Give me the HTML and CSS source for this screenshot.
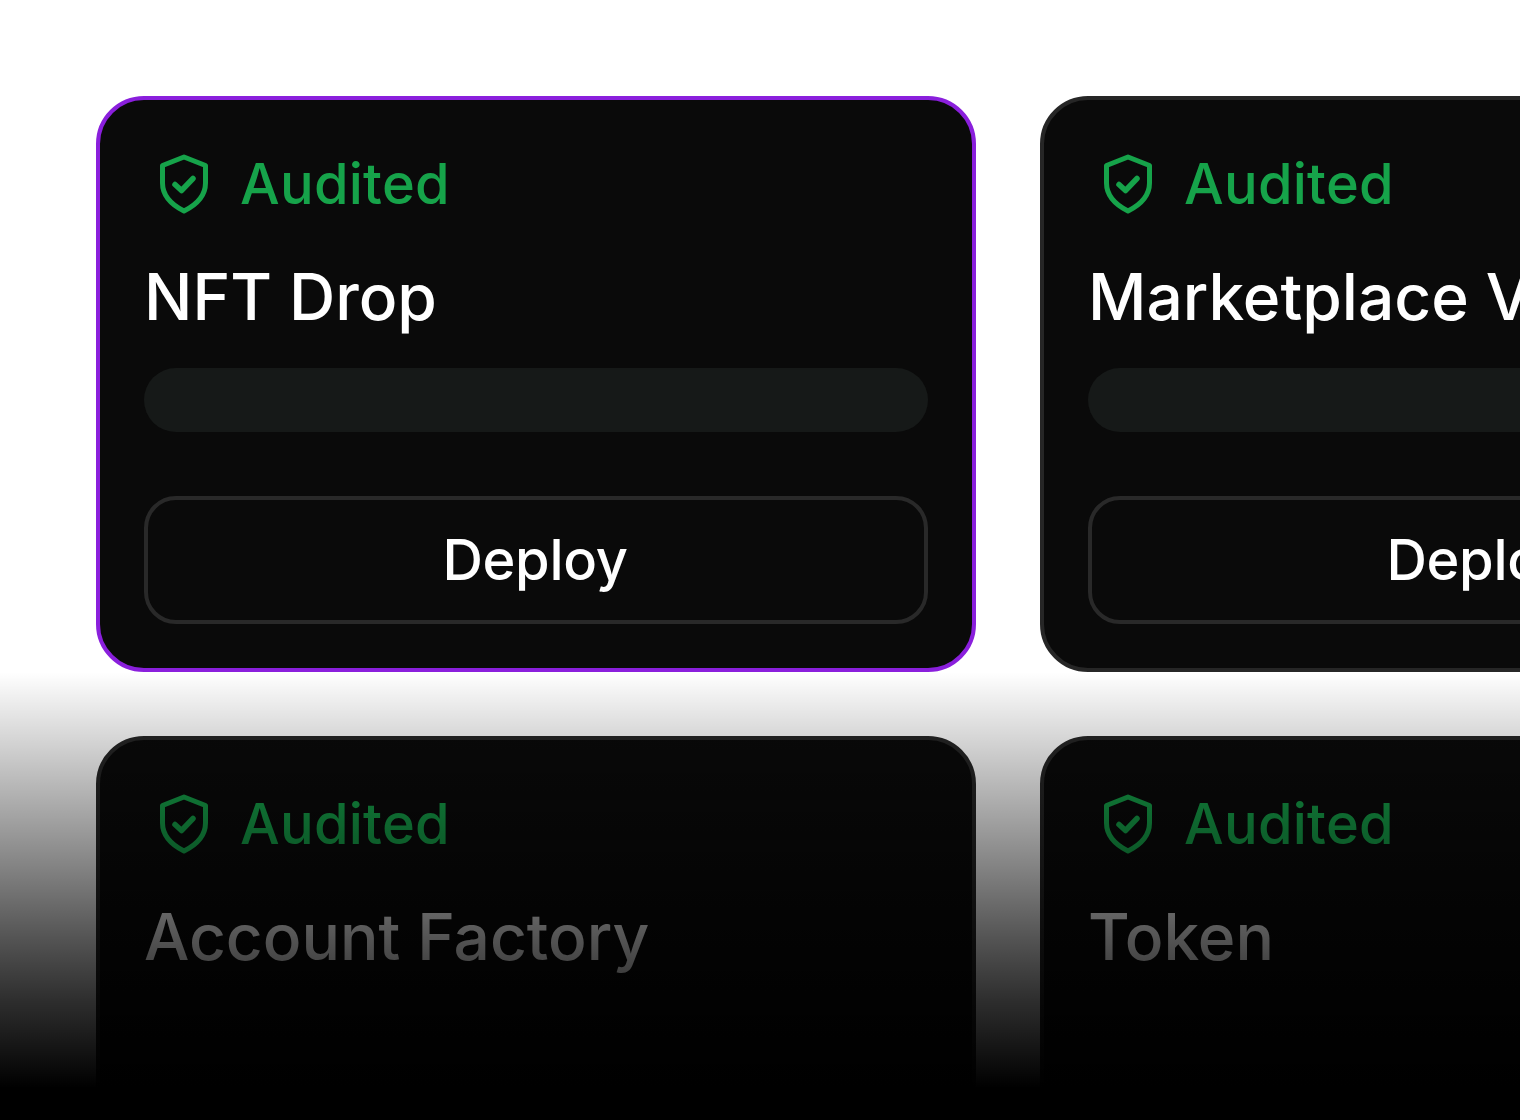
FILE: index.html
```html
<!DOCTYPE html>
<html lang="en">
  <head>
    <meta charset="UTF-8" />
    <meta name="viewport" content="width=device-width, initial-scale=1.0" />
    <title>Contracts</title>
    <link rel="stylesheet" href="styles.css">
  </head>

  <body>
    <main class="grid">
      <article class="card card-active">
        <div class="badge">
          <svg class="shield" viewBox="0 0 64 64" fill="none" stroke="currentColor" stroke-width="5" stroke-linecap="round" stroke-linejoin="round">
            <path d="M32 5 L10.5 13.5 V31 C10.5 45 22 54 32 59 C42 54 53.5 45 53.5 31 V13.5 Z" />
            <path d="M23 32.5 L29.5 38.5 L41 26.5" stroke-width="5.5" />
          </svg>
          <span>Audited</span>
        </div>
        <h2 class="name">NFT Drop</h2>
        <div class="bar"></div>
        <button class="deploy">Deploy</button>
      </article>

      <article class="card">
        <div class="badge">
          <svg class="shield" viewBox="0 0 64 64" fill="none" stroke="currentColor" stroke-width="5" stroke-linecap="round" stroke-linejoin="round">
            <path d="M32 5 L10.5 13.5 V31 C10.5 45 22 54 32 59 C42 54 53.5 45 53.5 31 V13.5 Z" />
            <path d="M23 32.5 L29.5 38.5 L41 26.5" stroke-width="5.5" />
          </svg>
          <span>Audited</span>
        </div>
        <h2 class="name">Marketplace V3</h2>
        <div class="bar"></div>
        <button class="deploy">Deploy</button>
      </article>

      <!-- second row sits under the fade, its bars don't show -->
      <article class="card">
        <div class="badge">
          <svg class="shield" viewBox="0 0 64 64" fill="none" stroke="currentColor" stroke-width="5" stroke-linecap="round" stroke-linejoin="round">
            <path d="M32 5 L10.5 13.5 V31 C10.5 45 22 54 32 59 C42 54 53.5 45 53.5 31 V13.5 Z" />
            <path d="M23 32.5 L29.5 38.5 L41 26.5" stroke-width="5.5" />
          </svg>
          <span>Audited</span>
        </div>
        <h2 class="name">Account Factory</h2>
        <div class="bar bar-empty"></div>
        <button class="deploy">Deploy</button>
      </article>

      <article class="card">
        <div class="badge">
          <svg class="shield" viewBox="0 0 64 64" fill="none" stroke="currentColor" stroke-width="5" stroke-linecap="round" stroke-linejoin="round">
            <path d="M32 5 L10.5 13.5 V31 C10.5 45 22 54 32 59 C42 54 53.5 45 53.5 31 V13.5 Z" />
            <path d="M23 32.5 L29.5 38.5 L41 26.5" stroke-width="5.5" />
          </svg>
          <span>Audited</span>
        </div>
        <h2 class="name">Token</h2>
        <div class="bar bar-empty"></div>
        <button class="deploy">Deploy</button>
      </article>
    </main>

    <!-- fade to black over the lower rows -->
    <div class="fade"></div>
  </body>
</html>
```

FILE: styles.css
```css
html, body, h2{
  margin: 0;
  padding: 0;
}

html, body{
  height: 1120px;
  overflow: hidden;
}

body{
  position: relative;
  background-color: #fff;
  font-family: Inter, "Liberation Sans", sans-serif;
}

.grid{
  display: grid;
  grid-template-columns: 880px 880px;
  gap: 64px;
  padding: 96px;
  width: max-content;
}

.card{
  display: flex;
  flex-direction: column;
  box-sizing: border-box;
  height: 576px;
  padding: 44px;
  border: 4px solid #262626;
  border-radius: 48px;
  background-color: #0a0a0a;
}

.card-active{
  border-color: #8a1fdc;
}

.badge{
  display: flex;
  align-items: center;
  gap: 24px;
  padding: 8px;
  color: #16a34a;
  font-size: 56px;
  line-height: 64px;
  font-weight: 500;
  letter-spacing: 0.25px;
}

.shield{
  width: 64px;
  height: 64px;
  flex: none;
}

.name{
  margin-top: 33px;
  color: #fff;
  font-size: 64px;
  line-height: 80px;
  font-weight: 500;
  white-space: nowrap;
}

.bar{
  height: 64px;
  margin-top: 31px;
  border-radius: 32px;
  background-color: #161918;
}

.bar-empty{
  background-color: transparent;
}

.deploy{
  height: 128px;
  margin-top: 64px;
  padding: 0 2px 0 0;
  border: 4px solid #292929;
  border-radius: 32px;
  background-color: transparent;
  color: #fff;
  font-family: inherit;
  font-size: 56px;
  font-weight: 500;
  letter-spacing: -0.3px;
}

.fade{
  position: absolute;
  top: 672px;
  left: 0;
  right: 0;
  bottom: 0;
  background-image: linear-gradient(to bottom,
    rgba(0, 0, 0, 0),
    rgba(0, 0, 0, 0.155) 64px,
    rgba(0, 0, 0, 0.49) 196px,
    rgba(0, 0, 0, 0.67) 266px,
    rgba(0, 0, 0, 0.82) 328px,
    #000 416px);
}
```
